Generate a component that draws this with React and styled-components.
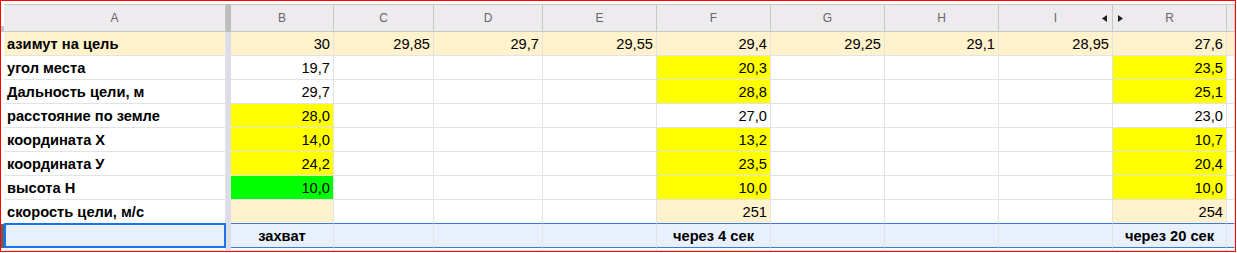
import React from 'react';
import styled, { createGlobalStyle } from 'styled-components';

const GRID = '3px 222px 5px 103px 100px 109px repeat(6, 114px) 8px';

const C = {
  cream: '#fff2cc',
  yellow: '#ffff00',
  green: '#00ff00',
  white: '#ffffff',
  sel: '#e8f0fe',
  line: '#e2e3e3',
  headLine: '#c8c8c8',
  headBg: '#eeebef',
  blue: '#1a73e8',
  selLine: '#3b7be0',
  lav: '#dcdde9',
  frozen: '#bdbdbd',
};

const GlobalStyle = createGlobalStyle`
  html, body { margin: 0; padding: 0; background: #fff; }
  body { font-family: 'Liberation Sans', Arial, sans-serif; }
`;

const Frame = styled.div`
  width: 1236px;
  height: 252px;
  box-sizing: border-box;
  border: 1px solid #ff0000;
  padding-top: 3px;
  overflow: hidden;
  background: #fff;
`;

const Row = styled.div`
  display: grid;
  grid-template-columns: ${GRID};
  height: ${(p) => p.$h}px;
`;

const Gutter = styled.div`
  background: ${(p) =>
    p.$tone === 'active'
      ? '#5f6368'
      : p.$tone === 'head'
      ? 'linear-gradient(to bottom, #ffffff 22px, #c4c4c4 22px)'
      : '#ffffff'};
`;

const HeaderCell = styled.div`
  position: relative;
  box-sizing: border-box;
  background: ${C.headBg};
  border-top: 1px solid ${C.headLine};
  border-bottom: 1px solid ${C.headLine};
  border-right: 1px solid ${C.headLine};
  display: flex;
  align-items: center;
  justify-content: center;
  font-size: 12px;
  color: #666;
`;

const Frozen = styled.div`
  background: ${(p) => (p.$head ? C.frozen : C.lav)};
`;

const Arrow = styled.svg`
  position: absolute;
  top: 10px;
  ${(p) => (p.$side === 'left' ? 'right: 5px;' : 'left: 5px;')}
  width: 5px;
  height: 7px;
`;

const Cell = styled.div`
  position: relative;
  box-sizing: border-box;
  background: ${(p) => p.$bg};
  border-right: 1px solid ${C.line};
  border-bottom: 1px solid ${(p) => p.$under || C.line};
  display: flex;
  align-items: flex-end;
  justify-content: ${(p) =>
    p.$align === 'left' ? 'flex-start' : p.$align === 'center' ? 'center' : 'flex-end'};
  padding: 0 3px 2px 3px;
  font-size: 11pt;
  line-height: 17px;
  font-weight: ${(p) => (p.$bold ? 700 : 400)};
  color: #000;
  white-space: nowrap;
  overflow: hidden;
`;

const ActiveCell = styled(Cell)`
  overflow: visible;
  &::after {
    content: '';
    position: absolute;
    left: 0;
    right: -1px;
    top: -1px;
    bottom: -1px;
    border: 2px solid ${C.blue};
    pointer-events: none;
  }
`;

const COLS = ['B', 'C', 'D', 'E', 'F', 'G', 'H', 'I', 'R'];

const W = C.white;
const Y = C.yellow;
const G = C.green;
const K = C.cream;

const sparse = (label, map, under) => ({
  label,
  labelBg: W,
  fillerBg: W,
  under,
  cells: COLS.map((c) => map[c] || ['', W]),
});

const rows = [
  {
    label: 'азимут на цель',
    labelBg: K,
    fillerBg: K,
    cells: ['30', '29,85', '29,7', '29,55', '29,4', '29,25', '29,1', '28,95', '27,6'].map((v) => [v, K]),
  },
  sparse('угол места', { B: ['19,7', W], F: ['20,3', Y], R: ['23,5', Y] }),
  sparse('Дальность цели, м', { B: ['29,7', W], F: ['28,8', Y], R: ['25,1', Y] }),
  sparse('расстояние по земле', { B: ['28,0', Y], F: ['27,0', W], R: ['23,0', W] }),
  sparse('координата Х', { B: ['14,0', Y], F: ['13,2', Y], R: ['10,7', Y] }),
  sparse('координата У', { B: ['24,2', Y], F: ['23,5', Y], R: ['20,4', Y] }),
  sparse('высота Н', { B: ['10,0', G], F: ['10,0', Y], R: ['10,0', Y] }),
  sparse('скорость цели, м/с', { B: ['', K], F: ['251', K], R: ['254', K] }, C.selLine),
];

const selected = { B: 'захват', F: 'через 4 сек', R: 'через 20 сек' };

export default function App() {
  return (
    <>
      <GlobalStyle />
      <Frame>
        <Row $h={28}>
          <Gutter $tone="head" />
          <HeaderCell>A</HeaderCell>
          <Frozen $head />
          {COLS.map((c) => (
            <HeaderCell key={c}>
              {c}
              {c === 'I' && (
                <Arrow $side="left" viewBox="0 0 5 7">
                  <polygon points="5,0 5,7 0,3.5" fill="#222" />
                </Arrow>
              )}
              {c === 'R' && (
                <Arrow $side="right" viewBox="0 0 5 7">
                  <polygon points="0,0 0,7 5,3.5" fill="#222" />
                </Arrow>
              )}
            </HeaderCell>
          ))}
          <HeaderCell />
        </Row>

        {rows.map((r, i) => (
          <Row $h={24} key={i}>
            <Gutter />
            <Cell $bg={r.labelBg} $align="left" $bold>
              {r.label}
            </Cell>
            <Frozen />
            {r.cells.map(([v, bg], j) => (
              <Cell key={j} $bg={bg} $under={r.under}>
                {v}
              </Cell>
            ))}
            <Cell $bg={r.fillerBg} $under={r.under} />
          </Row>
        ))}

        <Row $h={24}>
          <Gutter $tone="active" />
          <ActiveCell $bg={C.sel} $align="left" />
          <Frozen />
          {COLS.map((c) => (
            <Cell key={c} $bg={C.sel} $under={C.selLine} $align="center" $bold>
              {selected[c] || ''}
            </Cell>
          ))}
          <Cell $bg={C.sel} $under={C.selLine} />
        </Row>

        <Row $h={3}>
          <Gutter />
          <Cell $bg={W} />
          <Frozen />
          {COLS.map((c) => (
            <Cell key={c} $bg={W} />
          ))}
          <Cell $bg={W} />
        </Row>
      </Frame>
    </>
  );
}
